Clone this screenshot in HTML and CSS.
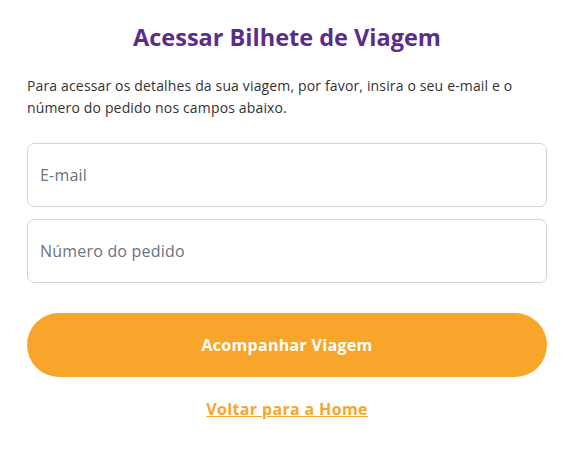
FILE: index.html
```html
<!DOCTYPE html>
<html lang="pt-BR">
<head>
<meta charset="utf-8">
<title>Acessar Bilhete de Viagem</title>
<link rel="stylesheet" href="styles.css">
</head>
<body>
<main class="card">
  <h1 class="title">Acessar Bilhete de Viagem</h1>
  <p class="intro">Para acessar os detalhes da sua viagem, por favor, insira o seu e-mail e o número do pedido nos campos abaixo.</p>
  <form class="form">
    <input class="field" type="email" placeholder="E-mail">
    <input class="field" type="text" placeholder="Número do pedido">
    <button class="btn" type="button">Acompanhar Viagem</button>
  </form>
  <a class="back" href="#">Voltar para a Home</a>
</main>
</body>
</html>
```
FILE: styles.css
```css
* { box-sizing: border-box; }
html, body { margin: 0; background: #fff; }
body { font-family: "Open Sans", "DejaVu Sans", sans-serif; color: #333; }
.card {
  width: 520px;
  margin-left: 27px;
  padding-top: 20px;
  display: flex;
  flex-direction: column;
}
.title {
  margin: 0;
  text-align: center;
  font-size: 23.5px;
  line-height: 34px;
  font-weight: 700;
  color: #5a2d8a;
}
.intro {
  margin: 21px 0 0;
  font-size: 14px;
  line-height: 22px;
  letter-spacing: 0.15px;
  color: #333;
}
.form {
  margin-top: 24px;
  display: flex;
  flex-direction: column;
  gap: 12px;
}
.field {
  height: 64px;
  width: 100%;
  border: 1px solid #d1d5db;
  border-radius: 7px;
  padding: 0 12px;
  font: inherit;
  font-size: 16px;
  letter-spacing: 0.2px;
  color: #333;
  outline: none;
}
.field::placeholder { color: #6b7280; }
.btn {
  margin-top: 18px;
  height: 64px;
  width: 100%;
  border: 0;
  border-radius: 32px;
  background: #f7a62b;
  color: #fff;
  font: inherit;
  font-size: 16px;
  font-weight: 700;
  letter-spacing: 0.3px;
}
.back {
  align-self: center;
  margin-top: 21px;
  color: #f7a62b;
  font-size: 16px;
  font-weight: 700;
  letter-spacing: 0.35px;
  text-decoration: underline;
}
```
